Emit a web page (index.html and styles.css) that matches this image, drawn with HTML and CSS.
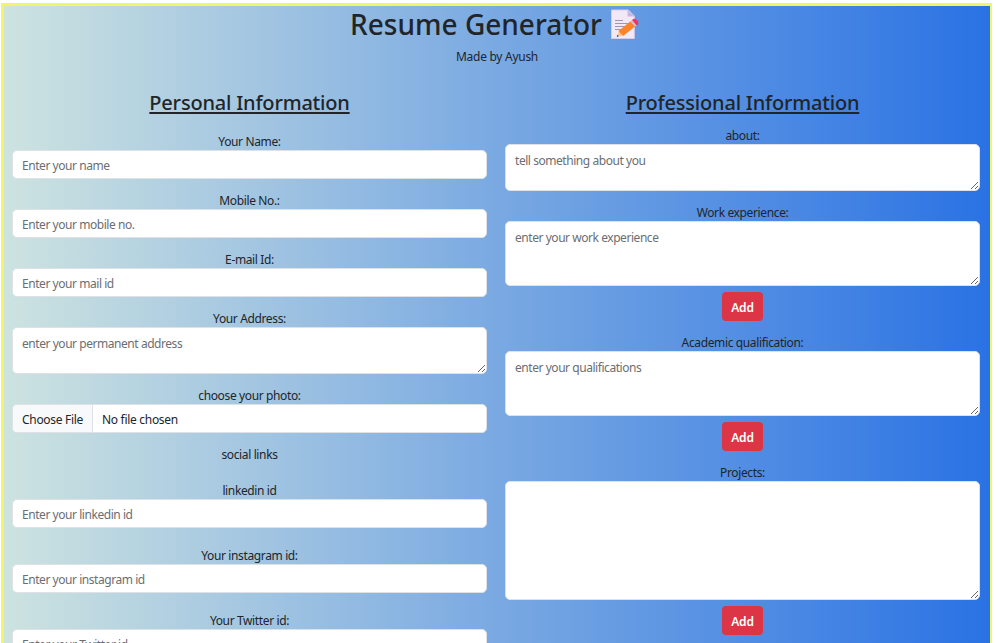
FILE: index.html
```html
<!DOCTYPE html>
<html lang="en">
<head>
<meta charset="utf-8">
<title>Resume Generator</title>
<link rel="stylesheet" href="styles.css">
</head>
<body>
<main class="page">
  <header class="header">
    <h1 class="title"><span class="title-text">Resume Generator</span>
      <svg class="memo" viewBox="0 0 30 32" width="30" height="32" aria-hidden="true">
        <path d="M1.5 1h16.8l6 6v22.5H1.5z" fill="#f3e9f6" stroke="#d8cbe7" stroke-width="1"/>
        <path d="M17.5 1v6.5h7z" fill="#c8b7df"/>
        <path d="M5 11.5h8M5 14.5h14M5 17.5h12M5 20.5h9" stroke="#9b98af" stroke-width="1"/>
        <path d="M7.2 27.5l1.8-6 4.2 4.7z" fill="#f8c48b"/>
        <path d="M8.5 22L20.5 12.3l4.6 5.2L13.2 27z" fill="#ff8429"/>
        <path d="M20.5 12.3l1.7-1.3 4.6 5.2-1.7 1.3z" fill="#c9bdd8"/>
        <path d="M22 11l1.3-1c2.8-.9 6 2.9 4.8 5.4l-1.3 1z" fill="#f92f60"/>
        <path d="M6.7 28l.7-2.2 1.4 1.4z" fill="#46364f"/>
      </svg>
    </h1>
    <p class="byline">Made by Ayush</p>
  </header>
  <form class="columns">
    <section class="column">
      <h2 class="heading">Personal Information</h2>
      <div class="field name"><label for="name">Your Name:</label><input id="name" class="control" placeholder="Enter your name"></div>
      <div class="field"><label for="mobile">Mobile No.:</label><input id="mobile" class="control" placeholder="Enter your mobile no."></div>
      <div class="field"><label for="mail">E-mail Id:</label><input id="mail" class="control" placeholder="Enter your mail id"></div>
      <div class="field"><label for="address">Your Address:</label><textarea id="address" class="control small" placeholder="enter your permanent address"></textarea></div>
      <div class="field"><label for="photo">choose your photo:</label><div id="photo" class="control file"><span class="choose">Choose File</span><span class="chosen">No file chosen</span></div></div>
      <p class="social">social links</p>
      <div class="field link"><label for="linkedin">linkedin id</label><input id="linkedin" class="control" placeholder="Enter your linkedin id"></div>
      <div class="field link"><label for="instagram">Your instagram id:</label><input id="instagram" class="control" placeholder="Enter your instagram id"></div>
      <div class="field link"><label for="twitter">Your Twitter id:</label><input id="twitter" class="control" placeholder="Enter your Twitter id"></div>
    </section>
    <section class="column">
      <h2 class="heading">Professional Information</h2>
      <div class="field about"><label for="about">about:</label><textarea id="about" class="control small" placeholder="tell something about you"></textarea></div>
      <div class="field"><label for="work">Work experience:</label><textarea id="work" class="control medium" placeholder="enter your work experience"></textarea><button type="button" class="add">Add</button></div>
      <div class="field"><label for="academic">Academic qualification:</label><textarea id="academic" class="control medium" placeholder="enter your qualifications"></textarea><button type="button" class="add">Add</button></div>
      <div class="field"><label for="projects">Projects:</label><textarea id="projects" class="control large"></textarea><button type="button" class="add">Add</button></div>
    </section>
  </form>
</main>
</body>
</html>
```
FILE: styles.css
```css
* { box-sizing: border-box; }
html { background: #fff; overflow: hidden; }
body {
  margin: 0;
  padding: 3px 4px 0 1px;
  height: 643px;
  overflow: hidden;
  color: #212529;
  font: 12px/18px "Noto Sans", "Open Sans", sans-serif;
  letter-spacing: -0.37px;
}
.page {
  height: 640px;
  overflow: hidden;
  padding: 0 8px;
  border: 3px solid #f2f665;
  border-right-width: 2px;
  border-bottom: 0;
  background: linear-gradient(90deg, #cde3e0, #7aa9e2 50%, #2a72e4) padding-box;
  text-align: center;
}
h1, h2, p { margin: 0; }
.title {
  display: flex;
  justify-content: center;
  gap: 8px;
  height: 37px;
  padding-right: 4px;
  font-size: 28px;
  font-weight: 500;
  line-height: 37px;
  letter-spacing: 0;
}
.memo { margin-top: 3px; }
.byline { height: 18px; margin-top: 5px; letter-spacing: -0.28px; }
.columns { display: grid; grid-template-columns: 475px 475px; gap: 18px; }
.heading {
  height: 25px;
  margin-top: 24px;
  font-size: 20px;
  line-height: 25px;
  font-weight: 500;
  letter-spacing: -0.2px;
  text-decoration: underline;
  text-decoration-thickness: 2px;
  text-underline-offset: 2px;
}
.field { display: flex; flex-direction: column; align-items: center; margin-bottom: 12px; }
.field label { height: 18px; line-height: 20px; }
.name { margin-top: 17px; }
.about { margin-top: 11px; }
.control {
  width: 100%;
  height: 29px;
  margin: 0;
  padding: 6px 9px 4px;
  border: 1px solid #dee2e6;
  border-radius: 5px;
  background: #fff;
  color: #212529;
  font: inherit;
  letter-spacing: -0.45px;
}
.control::placeholder { color: #6b6e72; opacity: 1; }
textarea.control { padding-top: 7px; resize: vertical; }
.small { height: 47px; }
.medium { height: 65px; }
.large { height: 119px; }
.file { display: flex; padding: 0; overflow: hidden; text-align: left; line-height: 30px; letter-spacing: -0.3px; }
.choose { width: 80px; padding-left: 9px; border-right: 1px solid #dee2e6; background: #f8f9fa; white-space: nowrap; }
.chosen { padding-left: 9px; }
.social { height: 18px; margin: 13px 0 17px; }
.link { margin-bottom: 18px; }
.add {
  width: 41px;
  height: 29px;
  margin-top: 6px;
  padding: 3px 0 0;
  border: 0;
  border-radius: 4px;
  background: #dc3545;
  color: #fff;
  font: 600 12px/18px "Noto Sans", "Open Sans", sans-serif;
  letter-spacing: -0.2px;
}
```
